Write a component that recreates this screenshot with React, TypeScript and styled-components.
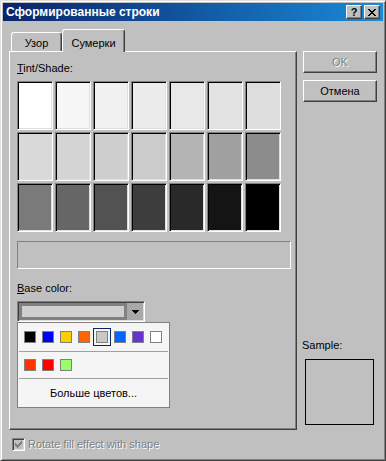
import React from 'react';
import styled, { createGlobalStyle, css } from 'styled-components';

const GlobalStyle = createGlobalStyle`
  html, body {
    margin: 0;
    padding: 0;
    background: #c0c0c0;
  }
  body {
    font-family: 'Liberation Sans', Arial, sans-serif;
    font-size: 11px;
    color: #000;
  }
  * {
    box-sizing: border-box;
  }
`;

const raised = css`
  border: 1px solid;
  border-color: #fff #404040 #404040 #fff;
  box-shadow: inset -1px -1px #808080;
`;

const Window = styled.div`
  width: 386px;
  height: 461px;
  background: #c0c0c0;
  border: 1px solid;
  border-color: #dfdfdf #404040 #404040 #dfdfdf;
  box-shadow: inset 1px 1px #fff, inset -1px -1px #808080;
  padding: 2px;
  display: flex;
  flex-direction: column;
`;

const TitleBar = styled.div`
  height: 18px;
  display: flex;
  align-items: center;
  padding: 0 3px 0 3px;
  background: linear-gradient(to right, #0a246a, #1a8ad8);
`;

const TitleText = styled.span`
  flex: 1;
  color: #fff;
  font-weight: bold;
  font-size: 12px;
  line-height: 14px;
`;

const TitleButton = styled.div`
  ${raised};
  width: 16px;
  height: 14px;
  background: #c0c0c0;
  display: flex;
  align-items: center;
  justify-content: center;
  font-weight: bold;
  font-size: 11px;
  line-height: 11px;
  & + & {
    margin-left: 2px;
  }
`;

const Body = styled.div`
  flex: 1;
  display: flex;
  gap: 6px;
  padding: 8px 0 0 6px;
`;

const LeftColumn = styled.div`
  width: 288px;
  display: flex;
  flex-direction: column;
`;

const TabRow = styled.div`
  display: flex;
  align-items: flex-end;
  padding-left: 2px;
`;

const Tab = styled.div<{ $active?: boolean }>`
  height: ${({ $active }) => ($active ? 23 : 19)}px;
  width: ${({ $active }) => ($active ? 63 : 51)}px;
  margin-bottom: ${({ $active }) => ($active ? -1 : 0)}px;
  padding-top: ${({ $active }) => ($active ? 4 : 2)}px;
  position: relative;
  z-index: ${({ $active }) => ($active ? 1 : 0)};
  background: #c0c0c0;
  border: 1px solid;
  border-bottom: none;
  border-color: #fff #404040 #404040 #fff;
  border-radius: 3px 3px 0 0;
  box-shadow: inset -1px 0 #808080;
  display: flex;
  align-items: center;
  justify-content: center;
  line-height: 13px;
`;

const Panel = styled.div`
  height: 379px;
  ${raised};
  padding: 10px 0 0 7px;
  display: flex;
  flex-direction: column;
`;

const Label = styled.div`
  line-height: 13px;
  height: 13px;
`;

const ShadeGrid = styled.div`
  margin-top: 6px;
  display: grid;
  grid-template-columns: repeat(7, 36px);
  grid-auto-rows: 49px;
  gap: 2px;
`;

const ShadeCell = styled.div<{ $color: string }>`
  background: ${({ $color }) => $color};
  border: 1px solid;
  border-color: #808080 #fff #fff #808080;
  box-shadow: inset 1px 1px #000, inset -1px -1px #dfdfdf;
`;

const PreviewBar = styled.div`
  margin-top: 9px;
  width: 274px;
  height: 28px;
  border: 1px solid;
  border-color: #808080 #fff #fff #808080;
`;

const BaseLabel = styled(Label)`
  margin-top: 13px;
`;

const ComboWrap = styled.div`
  margin-top: 6px;
  position: relative;
  width: 128px;
`;

const ComboBox = styled.div`
  height: 21px;
  display: flex;
  padding: 1px;
  border: 1px solid;
  border-color: #808080 #fff #fff #808080;
  box-shadow: inset 1px 1px #404040, inset -1px -1px #dfdfdf;
`;

const ComboField = styled.div`
  flex: 1;
  border: 3px solid #808080;
  background: #cfcfcf;
`;

const ComboButton = styled.div`
  width: 16px;
  background: #a8a8a8;
  display: flex;
  align-items: center;
  justify-content: center;
`;

const Popup = styled.div`
  position: absolute;
  top: 100%;
  left: 0;
  width: 153px;
  height: 86px;
  background: #f5f5f5;
  border: 1px solid #808080;
  padding-top: 5px;
  display: flex;
  flex-direction: column;
  z-index: 2;
`;

const SwatchRow = styled.div`
  display: flex;
  padding-left: 3px;
  height: 18px;
`;

const SwatchCell = styled.div<{ $selected?: boolean }>`
  width: 18px;
  height: 18px;
  display: flex;
  align-items: center;
  justify-content: center;
  border: 1px solid ${({ $selected }) => ($selected ? '#0a246a' : 'transparent')};
`;

const Swatch = styled.div<{ $color: string }>`
  width: 12px;
  height: 12px;
  border: 1px solid #808080;
  background: ${({ $color }) => $color};
`;

const Separator = styled.div<{ $top: number }>`
  margin: ${({ $top }) => $top}px 1px 0;
  height: 1px;
  background: #a0a0a0;
`;

const MoreColors = styled.div`
  flex: 1;
  display: flex;
  align-items: center;
  justify-content: center;
  padding-bottom: 1px;
`;

const CheckRow = styled.div`
  margin-top: 8px;
  height: 13px;
  display: flex;
  align-items: center;
  gap: 3px;
  padding-left: 3px;
`;

const CheckBox = styled.div`
  width: 13px;
  height: 13px;
  border: 1px solid;
  border-color: #808080 #fff #fff #808080;
  box-shadow: inset 1px 1px #404040, inset -1px -1px #dfdfdf;
  background: #c0c0c0;
  display: flex;
  align-items: center;
  justify-content: center;
`;

const DisabledText = styled.span`
  color: #808080;
  text-shadow: 1px 1px #fff;
  line-height: 13px;
`;

const RightColumn = styled.div`
  width: 74px;
  display: flex;
  flex-direction: column;
`;

const Button = styled.div<{ $disabled?: boolean }>`
  ${raised};
  height: 22px;
  background: #c0c0c0;
  display: flex;
  align-items: center;
  justify-content: center;
  color: ${({ $disabled }) => ($disabled ? '#808080' : '#000')};
  text-shadow: ${({ $disabled }) => ($disabled ? '1px 1px #fff' : 'none')};
  margin-top: 7px;
  &:first-child {
    margin-top: 22px;
  }
`;

const SampleBlock = styled.div`
  margin-top: auto;
  margin-bottom: 33px;
  display: flex;
  flex-direction: column;
`;

const SampleLabel = styled(Label)`
  margin-left: -1px;
`;

const SampleBox = styled.div`
  margin: 7px 0 0 2px;
  width: 69px;
  height: 66px;
  border: 1px solid #000;
`;

const shades = [
  '#ffffff', '#f7f7f7', '#f1f1f1', '#ececec', '#e8e8e8', '#e3e3e3', '#dddddd',
  '#d9d9d9', '#d4d4d4', '#cfcfcf', '#cbcbcb', '#b4b4b4', '#a0a0a0', '#8c8c8c',
  '#7a7a7a', '#666666', '#525252', '#3d3d3d', '#292929', '#141414', '#000000',
];

const baseColors = ['#000000', '#0000ff', '#ffcc00', '#ff6600', '#c8c8c8', '#0066ff', '#6633cc', '#ffffff'];
const recentColors = ['#ff3300', '#ff0000', '#99ff66'];

export default function App() {
  return (
    <>
      <GlobalStyle />
      <Window>
        <TitleBar>
          <TitleText>Сформированные строки</TitleText>
          <TitleButton>?</TitleButton>
          <TitleButton>
            <svg width="8" height="7" viewBox="0 0 8 7" shapeRendering="crispEdges">
              <path d="M0 0h2v1h-2zM6 0h2v1h-2zM1 1h2v1h-2zM5 1h2v1h-2zM2 2h4v1h-4zM3 3h2v1h-2zM2 4h4v1h-4zM1 5h2v1h-2zM5 5h2v1h-2zM0 6h2v1h-2zM6 6h2v1h-2z" fill="#000" />
            </svg>
          </TitleButton>
        </TitleBar>
        <Body>
          <LeftColumn>
            <TabRow>
              <Tab>Узор</Tab>
              <Tab $active>Сумерки</Tab>
            </TabRow>
            <Panel>
              <Label>
                <u>T</u>int/Shade:
              </Label>
              <ShadeGrid>
                {shades.map((c, i) => (
                  <ShadeCell key={i} $color={c} />
                ))}
              </ShadeGrid>
              <PreviewBar />
              <BaseLabel>
                <u>B</u>ase color:
              </BaseLabel>
              <ComboWrap>
                <ComboBox>
                  <ComboField />
                  <ComboButton>
                    <svg width="7" height="4" viewBox="0 0 7 4" shapeRendering="crispEdges">
                      <path d="M0 0h7v1h-7zM1 1h5v1h-5zM2 2h3v1h-3zM3 3h1v1h-1z" fill="#000" />
                    </svg>
                  </ComboButton>
                </ComboBox>
                <Popup>
                  <SwatchRow>
                    {baseColors.map((c, i) => (
                      <SwatchCell key={i} $selected={i === 4}>
                        <Swatch $color={c} />
                      </SwatchCell>
                    ))}
                  </SwatchRow>
                  <Separator $top={5} />
                  <SwatchRow style={{ marginTop: 4 }}>
                    {recentColors.map((c, i) => (
                      <SwatchCell key={i}>
                        <Swatch $color={c} />
                      </SwatchCell>
                    ))}
                  </SwatchRow>
                  <Separator $top={4} />
                  <MoreColors>Больше цветов...</MoreColors>
                </Popup>
              </ComboWrap>
            </Panel>
            <CheckRow>
              <CheckBox>
                <svg width="7" height="7" viewBox="0 0 7 7" shapeRendering="crispEdges">
                  <path d="M6 0h1v3h-1zM5 1h1v3h-1zM4 2h1v3h-1zM3 3h1v3h-1zM2 4h1v3h-1zM1 3h1v3h-1zM0 2h1v3h-1z" fill="#808080" />
                </svg>
              </CheckBox>
              <DisabledText>Rotate fill effect with shape</DisabledText>
            </CheckRow>
          </LeftColumn>
          <RightColumn>
            <Button $disabled>OK</Button>
            <Button>Отмена</Button>
            <SampleBlock>
              <SampleLabel>Sample:</SampleLabel>
              <SampleBox />
            </SampleBlock>
          </RightColumn>
        </Body>
      </Window>
    </>
  );
}
